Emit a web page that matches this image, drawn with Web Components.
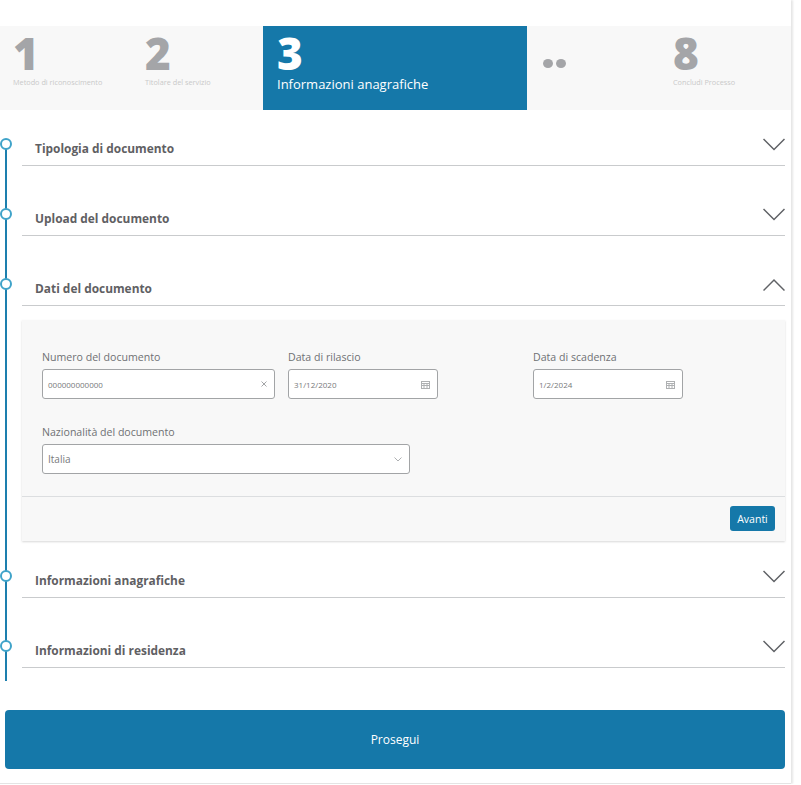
<!DOCTYPE html>
<html lang="it">
<head>
<meta charset="utf-8">
<title>Informazioni anagrafiche</title>
<style>
    html, body { margin: 0; background: #fff; }
    body { font-family: "Open Sans", "Noto Sans", sans-serif; color: #555; }
</style>
</head>
<body>
<app-shell>
    <step-bar>
        <step-item num="1" label="Metodo di riconoscimento"></step-item>
        <step-item num="2" label="Titolare del servizio"></step-item>
        <step-item num="3" label="Informazioni anagrafiche" active></step-item>
        <step-dots></step-dots>
        <step-item num="8" label="Concludi Processo"></step-item>
    </step-bar>
    <time-line>
        <accordion-item heading="Tipologia di documento"></accordion-item>
        <accordion-item heading="Upload del documento"></accordion-item>
        <accordion-item heading="Dati del documento" open>
            <form-row>
                <text-field style="width:233px;margin-right:13px" label="Numero del documento" value="000000000000" icon="clear"></text-field>
                <text-field style="width:150px;margin-right:95px" label="Data di rilascio" value="31/12/2020" icon="date"></text-field>
                <text-field style="width:150px" label="Data di scadenza" value="1/2/2024" icon="date"></text-field>
            </form-row>
            <form-row>
                <text-field style="width:368px" label="Nazionalità del documento" value="Italia" icon="select" big></text-field>
            </form-row>
            <action-button slot="footer" small>Avanti</action-button>
        </accordion-item>
        <accordion-item heading="Informazioni anagrafiche"></accordion-item>
        <accordion-item heading="Informazioni di residenza"></accordion-item>
    </time-line>
    <action-button>Prosegui</action-button>
</app-shell>

<script>
// Small helper, every component has the same constructor otherwise
class ShadowElement extends HTMLElement {
    constructor() {
        super();
        this.attachShadow({ mode: 'open' });
    }
}

class AppShell extends ShadowElement {
    connectedCallback() {
        this.shadowRoot.innerHTML = `
            <style>
                :host {
                    display: block;
                    width: 791px;
                    height: 784px;
                    padding-top: 26px;
                    box-sizing: border-box;
                    background: #fff;
                    border-bottom: 1px solid #e4e4e4;
                    box-shadow: 2px 0 2px #e6e6e6;
                }
            </style>
            <slot></slot>
        `;
    }
}

class StepBar extends ShadowElement {
    connectedCallback() {
        this.shadowRoot.innerHTML = `
            <style>
                :host {
                    display: grid;
                    grid-template-columns: 132px 131px 264px 133px 131px;
                    height: 84px;
                    background: #f8f8f8;
                }
            </style>
            <slot></slot>
        `;
    }
}

class StepItem extends ShadowElement {
    connectedCallback() {
        this.shadowRoot.innerHTML = `
            <style>
                :host {
                    display: flex;
                    flex-direction: column;
                    padding: 5px 0 0 13px;
                    color: #a4a5a8;
                }
                :host([active]) {
                    padding-left: 14px;
                    background: #1578a9;
                    color: #fff;
                }
                .num {
                    font-size: 44px;
                    font-weight: 800;
                    line-height: 44px;
                }
                .label {
                    font-size: 7.3px;
                    line-height: 10px;
                    margin-top: 2px;
                    color: #c9c9c9;
                    white-space: nowrap;
                }
                :host([active]) .label {
                    font-size: 13px;
                    line-height: 16px;
                    margin-top: 1px;
                    color: #fff;
                }
            </style>
            <div class="num">${this.getAttribute('num')}</div>
            <div class="label">${this.getAttribute('label')}</div>
        `;
    }
}

class StepDots extends ShadowElement {
    connectedCallback() {
        this.shadowRoot.innerHTML = `
            <style>
                :host {
                    display: flex;
                    gap: 3px;
                    padding: 33px 0 0 16px;
                }
                i {
                    width: 10px;
                    height: 9px;
                    border-radius: 50%;
                    background: #a4a5a8;
                }
            </style>
            <i></i><i></i>
        `;
    }
}

class TimeLine extends ShadowElement {
    connectedCallback() {
        this.shadowRoot.innerHTML = `
            <style>
                :host {
                    display: block;
                    position: relative;
                    height: 600px;
                    padding: 0 6px 0 22px;
                }
                .rail {
                    position: absolute;
                    left: 5px;
                    top: 30px;
                    height: 541px;
                    width: 2px;
                    background: #1d7fae;
                }
            </style>
            <div class="rail"></div>
            <slot></slot>
        `;
    }
}

class AccordionItem extends ShadowElement {
    connectedCallback() {
        const open = this.hasAttribute('open');
        this.shadowRoot.innerHTML = `
            <style>
                :host {
                    display: block;
                    position: relative;
                    margin-bottom: 14px;
                }
                :host([open]) {
                    margin-bottom: 1px;
                }
                .dot {
                    position: absolute;
                    left: -22px;
                    top: 28px;
                    width: 8px;
                    height: 8px;
                    border: 2px solid #3fa3c9;
                    border-radius: 50%;
                    background: #fff;
                }
                header {
                    display: flex;
                    justify-content: space-between;
                    height: 55px;
                    border-bottom: 1px solid #c9cbcd;
                    padding-left: 13px;
                }
                h3 {
                    margin: 29px 0 0;
                    font-size: 11.9px;
                    line-height: 18px;
                    font-weight: 700;
                    color: #5f6063;
                }
                svg {
                    display: block;
                    margin-top: 28px;
                }
                .panel {
                    margin-top: 14px;
                    height: 221px;
                    background: #f8f8f8;
                    box-shadow: 0 1px 2px #d8d8d8;
                    display: flex;
                    flex-direction: column;
                }
                .body {
                    flex: 1;
                    padding: 30px 20px 0;
                    border-bottom: 1px solid #dcdee0;
                }
                footer {
                    display: flex;
                    justify-content: flex-end;
                    height: 44px;
                    padding: 9px 10px 0;
                    box-sizing: border-box;
                }
            </style>
            <span class="dot"></span>
            <header>
                <h3>${this.getAttribute('heading')}</h3>
                <svg width="22" height="14" viewBox="0 0 22 14" fill="none" stroke="#606266" stroke-width="1.5">
                    <path d="${open ? 'M.5 12.5 L11 2 L21.5 12.5' : 'M.5 1 L11 11.5 L21.5 1'}"/>
                </svg>
            </header>
            ${open ? `
            <div class="panel">
                <div class="body"><slot></slot></div>
                <footer><slot name="footer"></slot></footer>
            </div>` : ''}
        `;
    }
}

class FormRow extends ShadowElement {
    connectedCallback() {
        this.shadowRoot.innerHTML = `
            <style>
                :host {
                    display: flex;
                    margin-bottom: 26px;
                }
                :host(:last-of-type) {
                    margin-bottom: 0;
                }
            </style>
            <slot></slot>
        `;
    }
}

const FIELD_ICONS = {
    clear: `<svg width="6" height="6" viewBox="0 0 6 6" stroke="#a3a5a7" stroke-width="1"><path d="M.5 .5 L5.5 5.5 M5.5 .5 L.5 5.5"/></svg>`,
    date: `<svg width="9" height="9" viewBox="0 0 9 9" fill="none" stroke="#aeb0b2" stroke-width="1"><path d="M0 1.5 H9 M0 3.5 H9 M0 5.5 H9 M0 8.5 H9 M.5 1 V9 M3 3 V9 M6 3 V9 M8.5 1 V9"/></svg>`,
    select: `<svg width="8" height="5" viewBox="0 0 8 5" fill="none" stroke="#aeb0b2" stroke-width="1"><path d="M.5 .5 L4 4 L7.5 .5"/></svg>`
};

class TextField extends ShadowElement {
    connectedCallback() {
        this.shadowRoot.innerHTML = `
            <style>
                :host {
                    display: block;
                    flex: none;
                }
                label {
                    display: block;
                    height: 19px;
                    font-size: 10.6px;
                    line-height: 14px;
                    color: #6f7174;
                }
                .box {
                    display: flex;
                    align-items: center;
                    justify-content: space-between;
                    height: 30px;
                    box-sizing: border-box;
                    padding: 0 7px 0 5px;
                    background: #fff;
                    border: 1px solid #a2a4a6;
                    border-radius: 3px;
                    font-size: 8px;
                    color: #77797b;
                }
                :host([big]) .box {
                    font-size: 10px;
                }
                svg {
                    display: block;
                }
            </style>
            <label>${this.getAttribute('label')}</label>
            <div class="box">
                <span>${this.getAttribute('value')}</span>
                ${FIELD_ICONS[this.getAttribute('icon')]}
            </div>
        `;
    }
}

class ActionButton extends ShadowElement {
    connectedCallback() {
        this.shadowRoot.innerHTML = `
            <style>
                :host {
                    display: flex;
                    align-items: center;
                    justify-content: center;
                    height: 59px;
                    margin: 0 6px 0 5px;
                    background: #1578a9;
                    border-radius: 4px;
                    color: #fff;
                    font-size: 12px;
                }
                :host([small]) {
                    width: 45px;
                    height: 25px;
                    margin: 0;
                    border-radius: 3px;
                    font-size: 10.5px;
                }
            </style>
            <slot></slot>
        `;
    }
}

// Define the new elements
customElements.define('app-shell', AppShell);
customElements.define('step-bar', StepBar);
customElements.define('step-item', StepItem);
customElements.define('step-dots', StepDots);
customElements.define('time-line', TimeLine);
customElements.define('accordion-item', AccordionItem);
customElements.define('form-row', FormRow);
customElements.define('text-field', TextField);
customElements.define('action-button', ActionButton);
</script>
</body>
</html>
